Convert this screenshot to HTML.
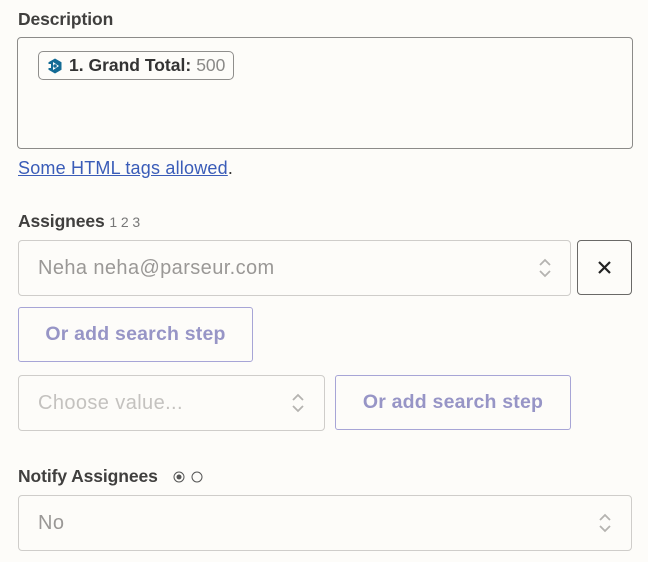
<!DOCTYPE html>
<html><head><meta charset="utf-8"><style>
*{box-sizing:border-box;margin:0;padding:0}
body{width:648px;height:562px;background:#fdfcf9;font-family:"Liberation Sans",sans-serif;position:relative;overflow:hidden;color:#3d3c3b}
.a{position:absolute;white-space:nowrap}
.lbl{font-size:17.5px;font-weight:bold;color:#403f3e;letter-spacing:-0.1px}
.box{border:1px solid #cfcdca;border-radius:4px;background:#fdfcf9}
.ph{font-size:20px;color:#9a9896;letter-spacing:0.4px}
.btn{border:1px solid #a7a5d6;border-radius:3px;color:#9795c6;font-size:19.5px;font-weight:bold;display:flex;align-items:center;justify-content:center;letter-spacing:0.2px}
.arr{position:absolute;width:14px;height:24px}
</style></head><body>
<div class="a lbl" style="left:18px;top:9px">Description</div>
<div class="a" style="left:17px;top:37px;width:616px;height:112px;border:1px solid #8c8b89;border-radius:4px"></div>
<div class="a" style="left:38px;top:51px;width:196px;height:29px;border:1px solid #8f8e8c;border-radius:5px;display:flex;align-items:center;padding-left:8px;font-size:17.5px">
<svg width="16" height="16" viewBox="0 0 16 16" style="margin-right:6px;flex:none"><polygon points="8,0.5 14.5,4.2 14.5,11.8 8,15.5 1.5,11.8 1.5,4.2" fill="#136b95"/><polygon points="6,4 12,8 6,12" fill="#fff"/><circle cx="8" cy="8" r="1.8" fill="#136b95"/><rect x="1" y="6" width="3" height="4" fill="#fdfcf9"/></svg>
<b style="color:#333">1. Grand Total:</b><span style="color:#8a8987;margin-left:5px">500</span></div>
<div class="a" style="left:18px;top:158px;font-size:18px;color:#3a5cb8;letter-spacing:0.2px"><span style="text-decoration:underline">Some HTML tags allowed</span><span style="color:#333">.</span></div>
<div class="a lbl" style="left:18px;top:211px">Assignees <span style="font-size:14px;font-weight:normal;color:#777">1 2 3</span></div>
<div class="a box" style="left:18px;top:240px;width:553px;height:56px"></div>
<div class="a ph" style="left:38px;top:257px">Neha neha@parseur.com</div>
<svg class="arr" style="left:538px;top:256px" viewBox="0 0 14 24"><path d="M2 9 L7 4 L12 9 M2 15 L7 20 L12 15" stroke="#b5b3b0" stroke-width="1.8" fill="none"/></svg>
<div class="a" style="left:577px;top:240px;width:55px;height:55px;border:1px solid #6a6967;border-radius:4px"></div>
<svg class="a" style="left:597px;top:260px" width="15" height="15" viewBox="0 0 15 15"><path d="M2 2L13 13M13 2L2 13" stroke="#222" stroke-width="2.2"/></svg>
<div class="a btn" style="left:18px;top:307px;width:235px;height:55px">Or add search step</div>
<div class="a box" style="left:18px;top:375px;width:307px;height:56px"></div>
<div class="a ph" style="left:38px;top:392px;color:#c4c2bf">Choose value...</div>
<svg class="arr" style="left:291px;top:391px" viewBox="0 0 14 24"><path d="M2 9 L7 4 L12 9 M2 15 L7 20 L12 15" stroke="#b5b3b0" stroke-width="1.8" fill="none"/></svg>
<div class="a btn" style="left:335px;top:375px;width:236px;height:55px">Or add search step</div>
<div class="a lbl" style="left:18px;top:466px">Notify Assignees</div>
<svg class="a" style="left:172px;top:470px" width="34" height="14" viewBox="0 0 34 14"><circle cx="7" cy="7" r="5" stroke="#555" fill="none"/><circle cx="7" cy="7" r="2.5" fill="#555"/><circle cx="25" cy="7" r="5" stroke="#555" fill="none"/></svg>
<div class="a box" style="left:18px;top:495px;width:614px;height:56px"></div>
<div class="a ph" style="left:38px;top:512px">No</div>
<svg class="arr" style="left:598px;top:511px" viewBox="0 0 14 24"><path d="M2 9 L7 4 L12 9 M2 15 L7 20 L12 15" stroke="#b5b3b0" stroke-width="1.8" fill="none"/></svg>
</body></html>
